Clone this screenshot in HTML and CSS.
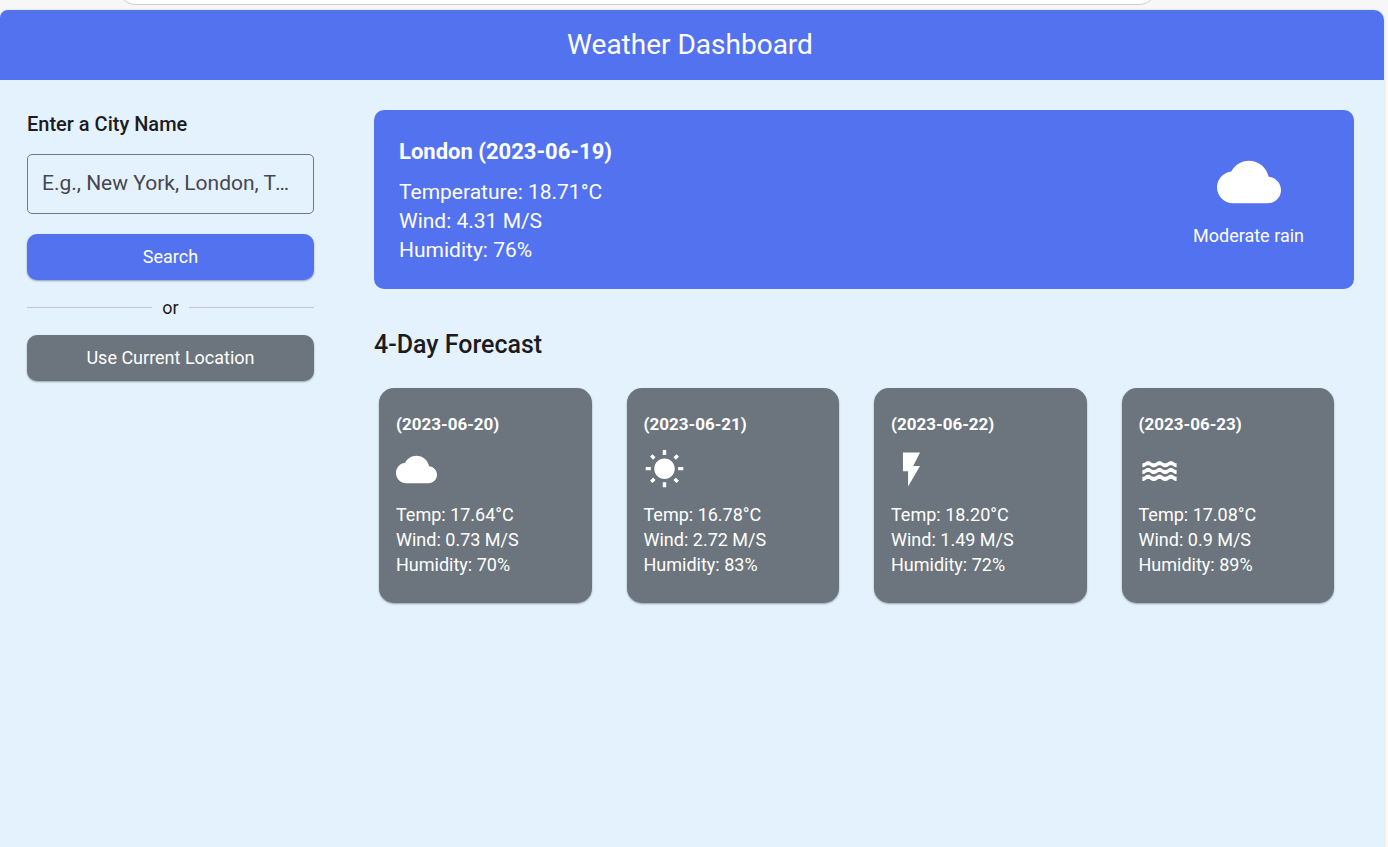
FILE: index.html
```html
<!DOCTYPE html>
<html lang="en">
<head>
<meta charset="utf-8">
<title>Weather Dashboard</title>
<link rel="stylesheet" href="styles.css">
</head>
<body>
<div class="browser-strip"><div class="address-bar"></div></div>
<div class="app">
  <header class="app-bar"><h1 class="app-title">Weather Dashboard</h1></header>
  <main class="content">
    <form class="sidebar">
      <label class="city-label" for="city">Enter a City Name</label>
      <input class="city-input" id="city" type="text" placeholder="E.g., New York, London, Tokyo">
      <button class="button button-primary" type="button">Search</button>
      <div class="divider">or</div>
      <button class="button button-secondary" type="button">Use Current Location</button>
    </form>
    <div class="weather">
      <section class="current">
        <div>
          <h2 class="current-title">London (2023-06-19)</h2>
          <p class="current-line">Temperature: 18.71°C</p>
          <p class="current-line">Wind: 4.31 M/S</p>
          <p class="current-line">Humidity: 76%</p>
        </div>
        <div class="condition">
          <svg class="condition-icon" viewBox="0 0 24 24" aria-hidden="true"><path d="M19.35 10.04C18.67 6.59 15.64 4 12 4 9.11 4 6.6 5.64 5.35 8.04 2.34 8.36 0 10.91 0 14c0 3.31 2.69 6 6 6h13c2.76 0 5-2.24 5-5 0-2.64-2.05-4.78-4.65-4.96z"/></svg>
          <p class="condition-text">Moderate rain</p>
        </div>
      </section>
      <h2 class="forecast-title">4-Day Forecast</h2>
      <section class="forecast">
        <article class="day">
          <h3 class="day-date">(2023-06-20)</h3>
          <svg class="day-icon" viewBox="0 0 24 24" aria-hidden="true"><path d="M19.35 10.04C18.67 6.59 15.64 4 12 4 9.11 4 6.6 5.64 5.35 8.04 2.34 8.36 0 10.91 0 14c0 3.31 2.69 6 6 6h13c2.76 0 5-2.24 5-5 0-2.64-2.05-4.78-4.65-4.96z"/></svg>
          <div class="day-details"><p>Temp: 17.64°C</p><p>Wind: 0.73 M/S</p><p>Humidity: 70%</p></div>
        </article>
        <article class="day">
          <h3 class="day-date">(2023-06-21)</h3>
          <svg class="day-icon" viewBox="0 0 24 24" aria-hidden="true"><path d="M6.76 4.84l-1.8-1.79-1.41 1.41 1.79 1.79 1.42-1.41zM4 10.5H1v2h3v-2zm9-9.95h-2V3.5h2V.55zm7.45 3.91l-1.41-1.41-1.79 1.79 1.41 1.41 1.79-1.79zm-3.21 13.7l1.79 1.8 1.41-1.41-1.8-1.79-1.4 1.4zM20 10.5v2h3v-2h-3zm-8-5c-3.31 0-6 2.69-6 6s2.69 6 6 6 6-2.69 6-6-2.69-6-6-6zm-1 16.95h2V19.5h-2v2.95zm-7.45-3.91l1.41 1.41 1.79-1.8-1.41-1.41-1.79 1.8z"/></svg>
          <div class="day-details"><p>Temp: 16.78°C</p><p>Wind: 2.72 M/S</p><p>Humidity: 83%</p></div>
        </article>
        <article class="day">
          <h3 class="day-date">(2023-06-22)</h3>
          <svg class="day-icon" viewBox="0 0 24 24" aria-hidden="true"><path d="M7 2v11h3v9l7-12h-4l4-8z"/></svg>
          <div class="day-details"><p>Temp: 18.20°C</p><p>Wind: 1.49 M/S</p><p>Humidity: 72%</p></div>
        </article>
        <article class="day">
          <h3 class="day-date">(2023-06-23)</h3>
          <svg class="day-icon" viewBox="0 0 24 24" aria-hidden="true">
            <defs><path id="wave" d="M2 8.3c1.7 0 1.7-1.2 3.35-1.2s1.7 1.2 3.33 1.2 1.7-1.2 3.33-1.2 1.7 1.2 3.33 1.2 1.7-1.2 3.33-1.2 1.7 1.2 3.33 1.2v2.4c-1.7 0-1.7-1.2-3.33-1.2s-1.7 1.2-3.33 1.2-1.7-1.2-3.33-1.2-1.7 1.2-3.33 1.2-1.7-1.2-3.33-1.2-1.65 1.2-3.35 1.2z"/></defs>
            <use href="#wave"/><use href="#wave" y="4"/><use href="#wave" y="8"/>
          </svg>
          <div class="day-details"><p>Temp: 17.08°C</p><p>Wind: 0.9 M/S</p><p>Humidity: 89%</p></div>
        </article>
      </section>
    </div>
  </main>
</div>
</body>
</html>
```

FILE: styles.css
```css
* {
  box-sizing: border-box;
}

body {
  display: flex;
  flex-direction: column;
  min-height: 100vh;
  margin: 0;
  background: #f7f7f7;
  color: #1d1b20;
  font-family: Roboto, "Liberation Sans", sans-serif;
}

h1, h2, h3, p {
  margin: 0;
}

.browser-strip {
  display: flex;
  align-items: flex-end;
  height: 10px;
  padding: 0 231px 5px 118px;
  overflow: hidden;
}

.address-bar {
  flex: 1;
  height: 36px;
  border: 1px solid #cfcfcf;
  border-radius: 18px;
  background: #fff;
}

.app {
  flex: 1;
  margin-right: 4px;
  overflow: hidden;
  border-radius: 8px 10px 0 0;
  background: #e3f2fd;
  box-shadow: 0 0 2px rgba(0, 0, 0, 0.2);
}

.app-bar {
  display: flex;
  align-items: center;
  justify-content: center;
  height: 70px;
  padding-right: 4px;
  background: #5372f0;
  color: #fff;
}

.app-title {
  font-size: 28px;
  font-weight: 400;
  line-height: 36px;
}

.content {
  display: grid;
  grid-template-columns: minmax(220px, 287px) 1fr;
  gap: 60px;
  padding: 30px 30px 30px 27px;
}

.sidebar {
  display: flex;
  flex-direction: column;
}

.city-label {
  margin-bottom: 16px;
  font-size: 20px;
  font-weight: 500;
  line-height: 28px;
}

.city-input {
  width: 100%;
  height: 60px;
  margin-bottom: 20px;
  padding: 0 14px 2px;
  border: 1px solid #79747e;
  border-radius: 5px;
  background: transparent;
  color: #1d1b20;
  font: 400 21px/28px Roboto, "Liberation Sans", sans-serif;
  text-overflow: ellipsis;
}

.city-input::placeholder {
  color: #49454f;
  opacity: 1;
}

.button {
  height: 46px;
  border: 0;
  border-radius: 10px;
  box-shadow: 0 1px 2px rgba(0, 0, 0, 0.35);
  color: #fff;
  font: 400 18px/24px Roboto, "Liberation Sans", sans-serif;
}

.button-primary {
  background: #5372f0;
}

.button-secondary {
  background: #6c757d;
}

.divider {
  display: flex;
  align-items: center;
  gap: 10px;
  padding: 15px 0;
  font-size: 18px;
  line-height: 25px;
}

.divider::before,
.divider::after {
  content: "";
  flex: 1;
  height: 1px;
  background: #c0c4d0;
}

.current {
  display: flex;
  align-items: center;
  justify-content: space-between;
  padding: 25px 50px 24px 25px;
  border-radius: 10px;
  background: #5372f0;
  color: #fff;
}

.current-title {
  margin-bottom: 9px;
  font-size: 22px;
  font-weight: 700;
  line-height: 34px;
}

.current-line {
  font-size: 21px;
  line-height: 29px;
}

.condition {
  display: flex;
  flex-direction: column;
  align-items: center;
  gap: 9px;
  padding-bottom: 3px;
}

.condition-icon {
  width: 64px;
  height: 64px;
  fill: #fff;
}

.condition-text {
  font-size: 18px;
  line-height: 25px;
}

.forecast-title {
  margin: 40px 0 27px;
  font-size: 25px;
  font-weight: 500;
  line-height: 32px;
}

.forecast {
  display: grid;
  grid-template-columns: repeat(4, 1fr);
  gap: 35px;
  padding: 0 20px 0 5px;
}

.day {
  display: flex;
  flex-direction: column;
  align-items: flex-start;
  gap: 12px;
  padding: 24px 17px 26px;
  border-radius: 15px;
  background: #6c757d;
  box-shadow: 0 1px 2px rgba(0, 0, 0, 0.35);
  color: #fff;
}

.day-date {
  font-size: 17px;
  font-weight: 700;
  line-height: 25px;
}

.day-icon {
  width: 41px;
  height: 41px;
  fill: #fff;
}

.day-details {
  font-size: 18px;
  line-height: 25px;
}
```
